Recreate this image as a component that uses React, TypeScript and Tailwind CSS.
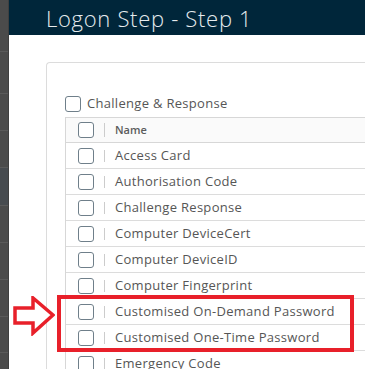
import React from "react";

const rows = [
  "Access Card",
  "Authorisation Code",
  "Challenge Response",
  "Computer DeviceCert",
  "Computer DeviceID",
  "Computer Fingerprint",
  "Customised On-Demand Password",
  "Customised One-Time Password",
  "Emergency Code",
];

function Box() {
  return <div className="w-[16px] h-[16px] rounded-[3px] border border-[#6f7f8a] bg-white shrink-0" />;
}

export default function App() {
  return (
    <div
      className="relative flex w-[365px] h-[369px] overflow-hidden bg-white"
      style={{ fontFamily: "'Open Sans', 'Liberation Sans', sans-serif" }}
    >
      <div className="w-[9px] shrink-0 bg-[#4b4b4b] border-r border-[#3f3f3f] flex flex-col">
        <div className="h-[52px] border-b border-[#5a5a5a]" />
        <div className="h-[42px] border-b border-[#5a5a5a]" />
        <div className="h-[37px] border-b border-[#5a5a5a]" />
        <div className="h-[37px] border-b border-[#5a5a5a]" />
        <div className="h-[38px] border-b border-[#5a5a5a] bg-[#474b4f]" />
        <div className="h-[37px] border-b border-[#5a5a5a]" />
        <div className="h-[37px] border-b border-[#5a5a5a]" />
        <div className="h-[37px] border-b border-[#5a5a5a]" />
        <div className="h-[36px] border-b border-[#5a5a5a]" />
      </div>
      <div className="flex-1 flex flex-col min-w-0">
        <div className="h-[35px] shrink-0 bg-[#00263a] pl-[37px] flex items-center">
          <span className="text-[22px] font-light text-[#e6ecef] leading-none tracking-[0.7px] whitespace-nowrap">
            Logon Step - Step 1
          </span>
        </div>
        <div className="pl-[37px] pt-[27px]">
          <div className="border-l border-t border-[#dcdcdc] rounded-tl-[4px] pl-[18px] pt-[33px]">
            <div className="flex items-center gap-[6px] h-[16px]">
              <Box />
              <span className="text-[13px] tracking-[0.3px] text-[#565656] whitespace-nowrap">Challenge &amp; Response</span>
            </div>
            <div className="mt-[5px] border-l border-t border-[#d7d7d7]">
              <div className="h-[25px] flex items-center bg-[#fafafa] border-b border-[#d7d7d7]">
                <div className="pl-[12px] pr-[10px] flex items-center">
                  <Box />
                </div>
                <div className="w-px h-[14px] bg-[#cccccc]" />
                <span className="pl-[10px] text-[11px] font-semibold text-[#5c5c5c]">Name</span>
              </div>
              {rows.map((r) => (
                <div key={r} className="h-[26px] flex items-center border-b border-[#dcdcdc]">
                  <div className="pl-[12px] pr-[10px] flex items-center">
                    <Box />
                  </div>
                  <div className="w-px h-[12px] bg-[#cccccc]" />
                  <span className="pl-[10px] text-[13px] tracking-[0.3px] text-[#565656] whitespace-nowrap">{r}</span>
                </div>
              ))}
            </div>
          </div>
        </div>
      </div>
      <div className="absolute left-[57px] top-[295px] w-[297px] h-[57px] border-[4px] border-[#e8202a]" />
      <svg className="absolute left-[13px] top-[296px]" width="42" height="40" viewBox="0 0 42 40">
        <polygon
          points="2,12 20,12 20,2 40,19 20,37 20,27 2,27"
          fill="white"
          stroke="#e8202a"
          strokeWidth="3.5"
          strokeLinejoin="miter"
        />
      </svg>
    </div>
  );
}
